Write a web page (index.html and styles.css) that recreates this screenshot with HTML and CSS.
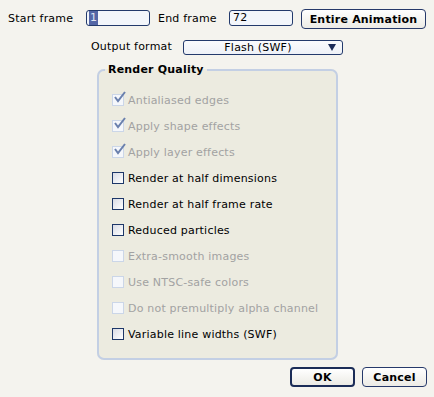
FILE: index.html
```html
<!DOCTYPE html>
<html>

<head>
    <link rel="stylesheet" href="styles.css">
</head>

<body>

    <div class="frames">
        <label class="lbl lbl-start">Start frame</label>
        <div class="field"><span class="sel">1</span></div>
        <label class="lbl lbl-end">End frame</label>
        <div class="field">72</div>
        <button class="btn btn-wide">Entire Animation</button>
    </div>

    <div class="format">
        <label class="lbl lbl-format">Output format</label>
        <div class="select">
            <span class="select-text">Flash (SWF)</span>
            <span class="arrow"></span>
        </div>
    </div>

    <!-- Render quality group -->
    <fieldset class="group">
        <legend>Render Quality</legend>
        <div class="opt disabled"><span class="box"><svg class="tick" width="14" height="14" viewBox="0 0 14 14"><path d="M2 6 L5 10 L12 1" fill="none" stroke="#6a80ad" stroke-width="2"/></svg></span>Antialiased edges</div>
        <div class="opt disabled"><span class="box"><svg class="tick" width="14" height="14" viewBox="0 0 14 14"><path d="M2 6 L5 10 L12 1" fill="none" stroke="#6a80ad" stroke-width="2"/></svg></span>Apply shape effects</div>
        <div class="opt disabled"><span class="box"><svg class="tick" width="14" height="14" viewBox="0 0 14 14"><path d="M2 6 L5 10 L12 1" fill="none" stroke="#6a80ad" stroke-width="2"/></svg></span>Apply layer effects</div>
        <div class="opt"><span class="box"></span>Render at half dimensions</div>
        <div class="opt"><span class="box"></span>Render at half frame rate</div>
        <div class="opt"><span class="box"></span>Reduced particles</div>
        <div class="opt disabled"><span class="box"></span>Extra-smooth images</div>
        <div class="opt disabled"><span class="box"></span>Use NTSC-safe colors</div>
        <div class="opt disabled"><span class="box"></span>Do not premultiply alpha channel</div>
        <div class="opt"><span class="box"></span>Variable line widths (SWF)</div>
    </fieldset>

    <div class="actions">
        <button class="btn btn-default">OK</button>
        <button class="btn">Cancel</button>
    </div>

</body>

</html>
```

FILE: styles.css
```css
body {
    margin: 0;
    background-color: #f4f3ee;
    font-family: "DejaVu Sans", Verdana, sans-serif;
    font-size: 11px;
    letter-spacing: 0.2px;
    color: #000;
}

.frames {
    display: flex;
    align-items: flex-start;
    margin: 9px 0 0 8px;
    height: 20px;
}

.lbl {
    line-height: 16px;
    margin-top: 2px;
}

.lbl-start {
    width: 78px;
}

.lbl-end {
    width: 71px;
    margin-left: 8px;
}

.field {
    box-sizing: border-box;
    width: 64px;
    height: 16px;
    margin-top: 1px;
    padding: 0 3px;
    border: 1px solid #233a6c;
    border-radius: 3px;
    background-color: #f3f6fb;
    line-height: 14px;
}

.sel {
    display: inline-block;
    margin-left: -1px;
    padding: 0 1px;
    background-color: #5466a6;
    color: #dfe4f2;
}

.btn {
    box-sizing: border-box;
    height: 20px;
    padding: 0;
    border: 1px solid #26396a;
    border-radius: 4px;
    background: linear-gradient(#ffffff, #ecebe5);
    font-family: "DejaVu Sans", Verdana, sans-serif;
    font-size: 11px;
    font-weight: bold;
    letter-spacing: 0.2px;
    color: #000;
}

.btn-wide {
    width: 125px;
    margin-left: 8px;
}

/* Output format row */
.format {
    display: flex;
    align-items: center;
    margin: 10px 0 0 91px;
    height: 16px;
}

.lbl-format {
    width: 92px;
    margin-top: 0;
}

.select {
    box-sizing: border-box;
    display: flex;
    align-items: center;
    width: 160px;
    height: 15px;
    padding: 0 6px 0 4px;
    border: 1px solid #233a6c;
    border-radius: 3px;
    background: linear-gradient(#fafbfd, #eef1f7);
}

.select-text {
    flex: 1;
    text-align: center;
    line-height: 13px;
}

.arrow {
    width: 0;
    height: 0;
    border-left: 4px solid transparent;
    border-right: 4px solid transparent;
    border-top: 7px solid #1c2c58;
}

/* Group box */
.group {
    box-sizing: border-box;
    width: 241px;
    margin: 8px 0 0 97px;
    padding: 11px 0 11px 0;
    border: 2px solid #c3cfe4;
    border-radius: 7px;
    background-color: #ecebe0;
}

.group legend {
    margin-left: 6px;
    padding: 0 3px;
    font-weight: bold;
    line-height: 13px;
}

.opt {
    display: flex;
    align-items: center;
    height: 26px;
    padding-left: 13px;
}

.box {
    box-sizing: border-box;
    position: relative;
    width: 12px;
    height: 12px;
    margin-right: 4px;
    border: 1px solid #1d3769;
    background: linear-gradient(135deg, #d9dce6, #ffffff);
}

.disabled {
    color: #a2a2a2;
}

.disabled .box {
    border-color: #cbd6e8;
    background: #f5f7fb;
}

.tick {
    position: absolute;
    left: 0;
    top: -4px;
}

.actions {
    display: flex;
    justify-content: flex-end;
    gap: 7px;
    margin: 7px 7px 0 0;
}

.actions .btn {
    width: 65px;
}

.btn-default {
    border: 2px solid #1b2c57;
}
```
